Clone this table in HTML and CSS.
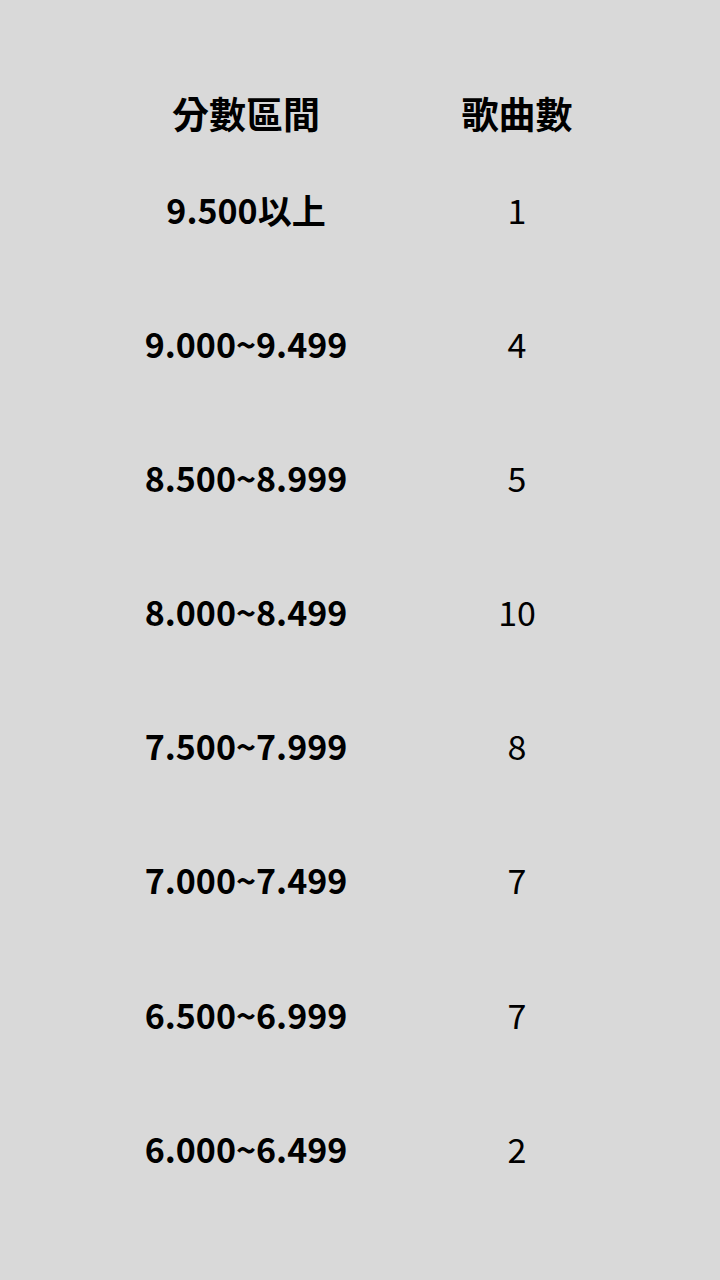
FILE: index.html
```html
<!DOCTYPE html>
<html>
<head>
    <title>分數區間統計</title>
    <link rel="stylesheet" href="styles.css">
</head>
<body>
    <div class="score-table">
        <div class="head">分數區間</div>
        <div class="head">歌曲數</div>

        <div class="range">9.500以上</div>
        <div class="count">1</div>

        <div class="range">9.000~9.499</div>
        <div class="count">4</div>

        <div class="range">8.500~8.999</div>
        <div class="count">5</div>

        <div class="range">8.000~8.499</div>
        <div class="count">10</div>

        <div class="range">7.500~7.999</div>
        <div class="count">8</div>

        <div class="range">7.000~7.499</div>
        <div class="count">7</div>

        <div class="range">6.500~6.999</div>
        <div class="count">7</div>

        <div class="range">6.000~6.499</div>
        <div class="count">2</div>
    </div>
</body>
</html>
```

FILE: styles.css
```css
body {
    background-color: #d9d9d9;
    color: #000;
    font-family: "Noto Sans CJK TC", "Noto Sans", sans-serif;
    margin: 0;
    height: 1280px;
}

.score-table {
    display: grid;
    grid-template-columns: 270px 272px;
    padding: 88px 0 0 111px;
}

.score-table div {
    text-align: center;
    height: 134.2px;
    line-height: 50px;
}

.head {
    font-size: 37px;
    font-weight: 700;
}

.score-table .head {
    height: 96.5px;
}

.range {
    font-size: 34px;
    font-weight: 700;
}

.count {
    font-size: 34px;
    font-weight: 400;
}
```
